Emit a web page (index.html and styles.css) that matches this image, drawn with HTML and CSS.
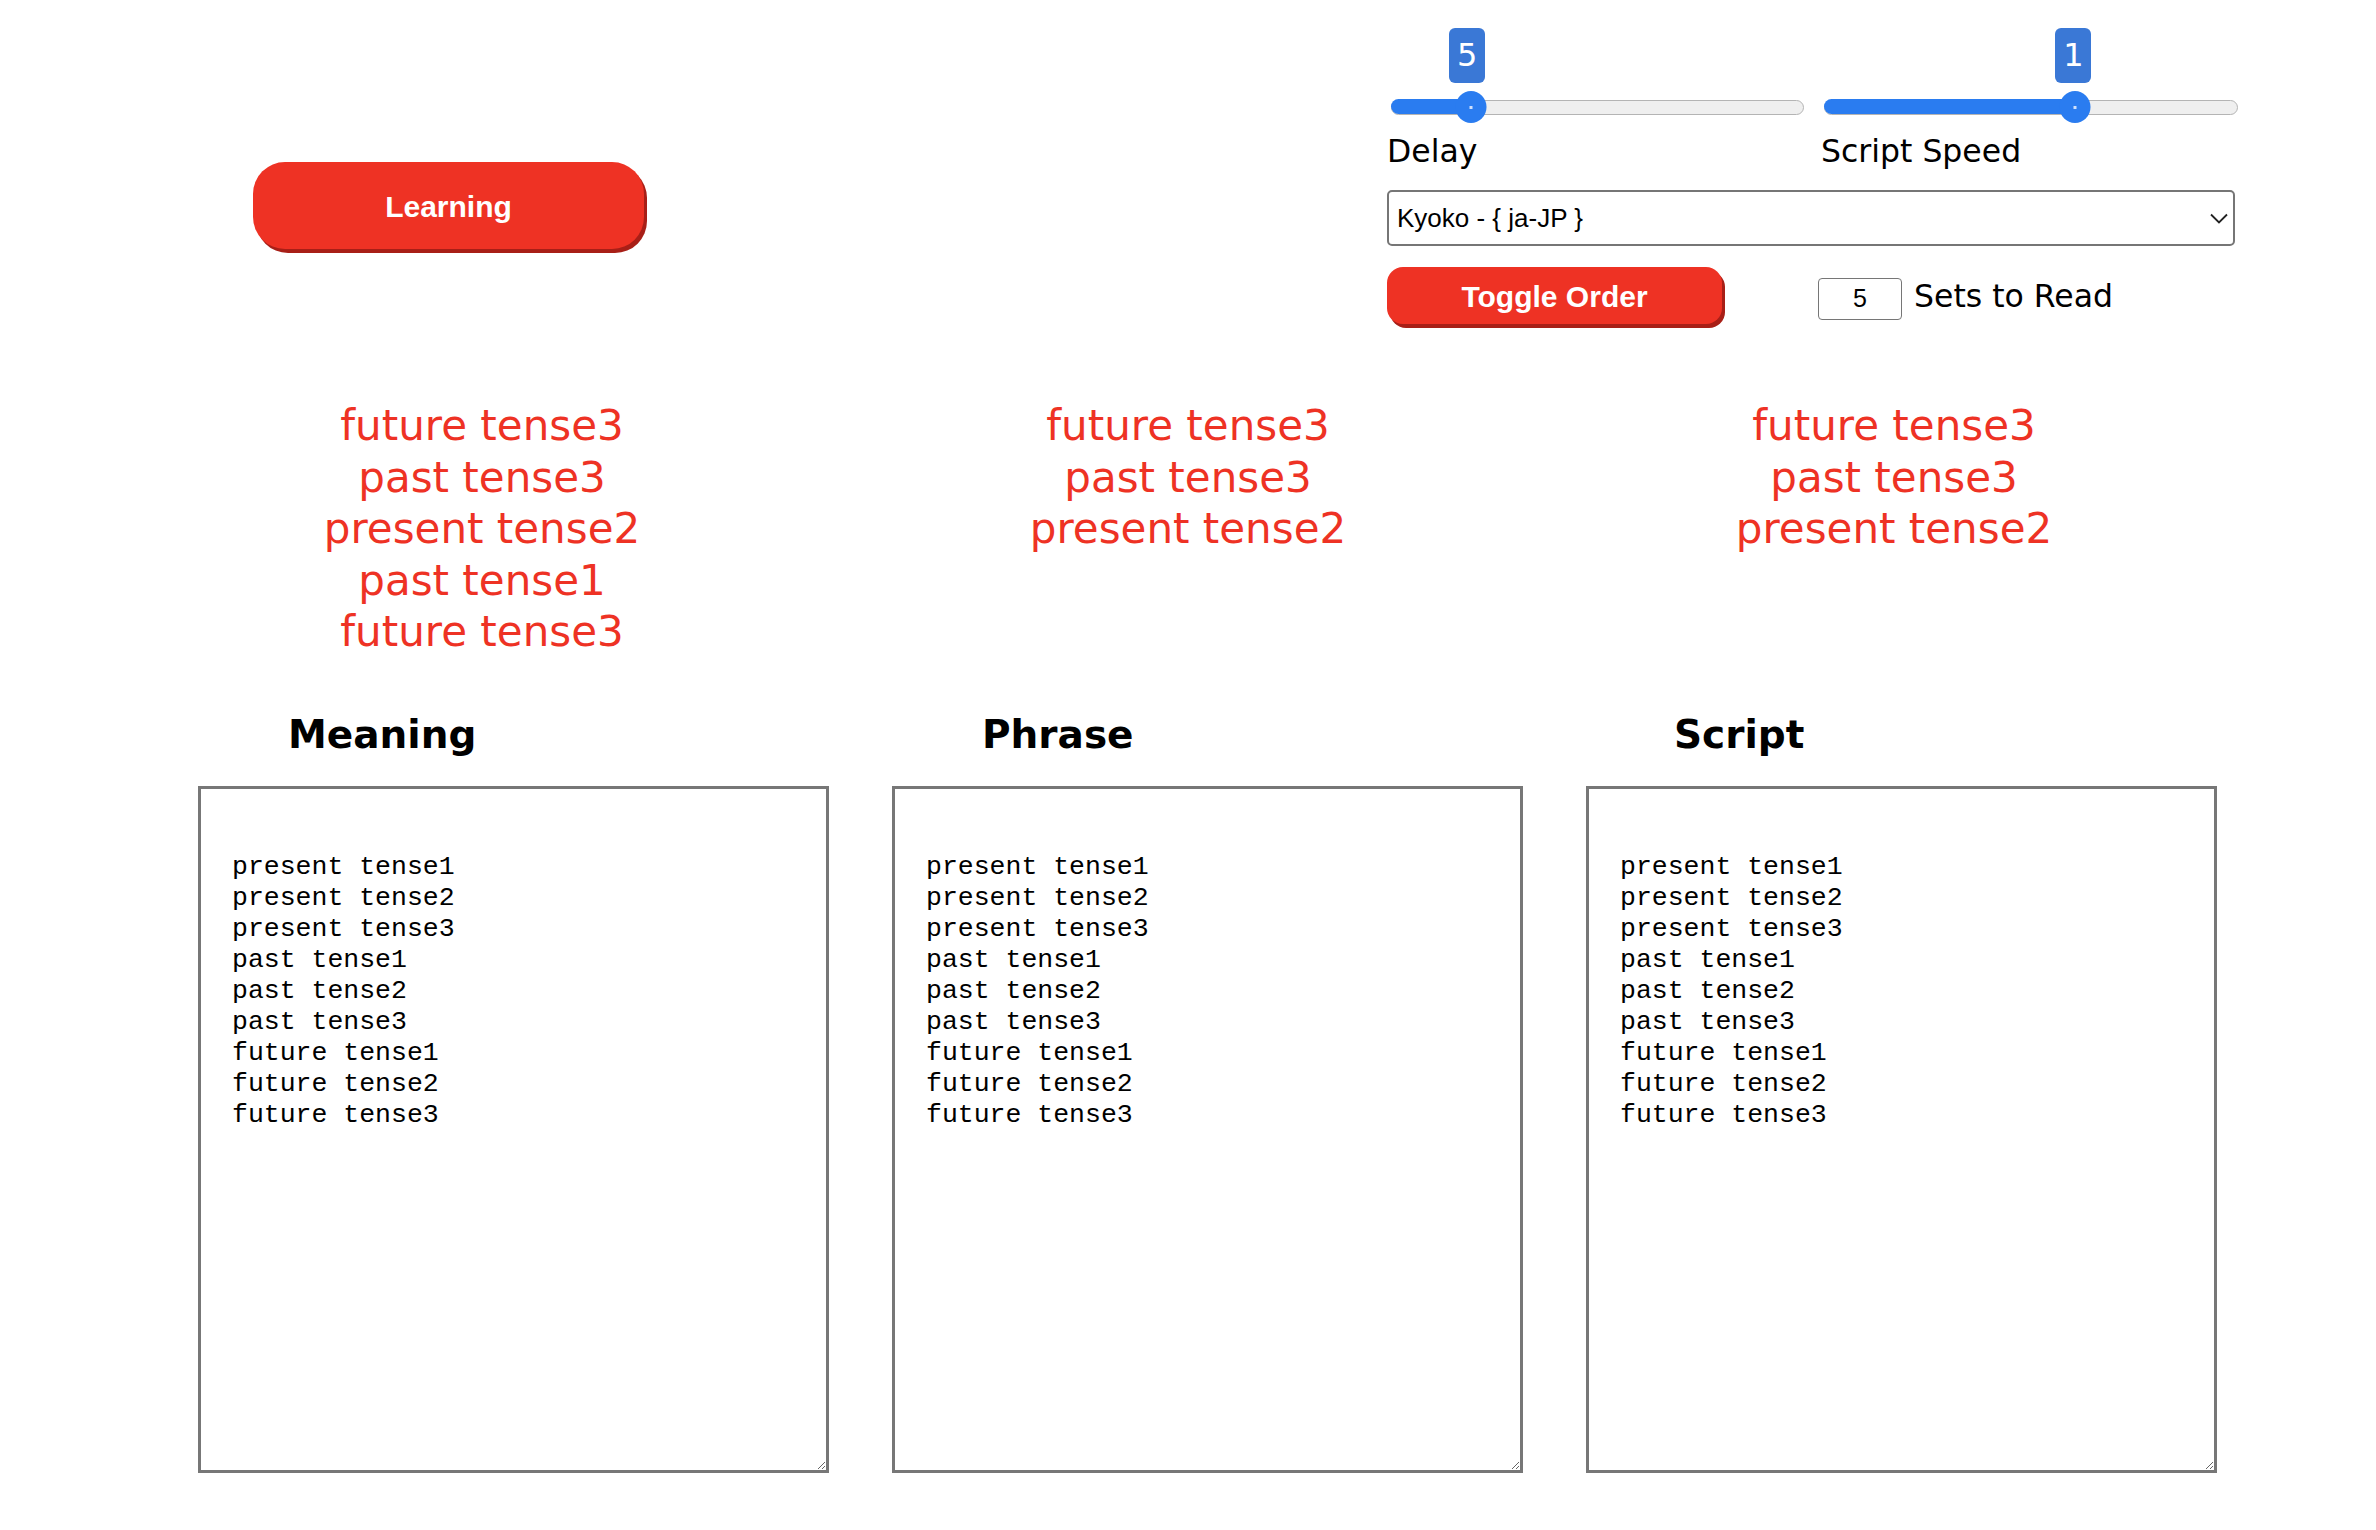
FILE: index.html
```html
<!DOCTYPE html>
<html lang="en">
<head>
<meta charset="utf-8">
<title>Learning</title>
<link rel="stylesheet" href="styles.css">
</head>
<body>
<div class="page">
  <header class="top">
    <button class="btn btn-learning" type="button">Learning</button>
    <div class="panel">
      <div class="sliders">
        <div class="slider slider-delay">
          <div class="rail">
            <div class="track">
              <div class="fill" style="width:19.3%"></div>
              <div class="thumb" style="left:19.3%"><span class="dot"></span></div>
              <div class="badge" style="left:18.3%">5</div>
            </div>
          </div>
          <div class="label">Delay</div>
        </div>
        <div class="slider slider-speed">
          <div class="rail">
            <div class="track">
              <div class="fill" style="width:60.8%"></div>
              <div class="thumb" style="left:60.8%"><span class="dot"></span></div>
              <div class="badge" style="left:60.3%">1</div>
            </div>
          </div>
          <div class="label">Script Speed</div>
        </div>
      </div>
      <div class="select-wrap">
        <select class="voice">
          <option>Kyoko - { ja-JP }</option>
        </select>
        <svg class="chevron" width="18" height="11" viewBox="0 0 18 11" aria-hidden="true"><path d="M1 1.5 L9 9.5 L17 1.5" fill="none" stroke="#222" stroke-width="1.8"/></svg>
      </div>
      <div class="order-row">
        <button class="btn btn-toggle" type="button">Toggle Order</button>
        <input class="sets" type="text" value="5">
        <span class="sets-label">Sets to Read</span>
      </div>
    </div>
  </header>

  <section class="current">
    <div class="current-col">
      <div>future tense3</div>
      <div>past tense3</div>
      <div>present tense2</div>
      <div>past tense1</div>
      <div>future tense3</div>
    </div>
    <div class="current-col">
      <div>future tense3</div>
      <div>past tense3</div>
      <div>present tense2</div>
    </div>
    <div class="current-col">
      <div>future tense3</div>
      <div>past tense3</div>
      <div>present tense2</div>
    </div>
  </section>

  <section class="lists">
    <div class="list">
      <h2 class="list-title">Meaning</h2>
      <textarea class="list-box" spellcheck="false">present tense1
present tense2
present tense3
past tense1
past tense2
past tense3
future tense1
future tense2
future tense3</textarea>
    </div>
    <div class="list">
      <h2 class="list-title">Phrase</h2>
      <textarea class="list-box" spellcheck="false">present tense1
present tense2
present tense3
past tense1
past tense2
past tense3
future tense1
future tense2
future tense3</textarea>
    </div>
    <div class="list">
      <h2 class="list-title list-title-script">Script</h2>
      <textarea class="list-box" spellcheck="false">present tense1
present tense2
present tense3
past tense1
past tense2
past tense3
future tense1
future tense2
future tense3</textarea>
    </div>
  </section>
</div>
</body>
</html>
```

FILE: styles.css
```css
* {
  box-sizing: border-box;
}

html, body {
  margin: 0;
  padding: 0;
  background: #ffffff;
}

body {
  font-family: "DejaVu Sans", Verdana, sans-serif;
  color: #000;
}

.page {
  width: 2376px;
  min-height: 1530px;
}

/* ---------- top area ---------- */
.top {
  display: flex;
  justify-content: space-between;
  align-items: flex-start;
  padding: 27px 133px 0 253px;
}

.btn {
  border: none;
  background: #ee3224;
  color: #fff;
  font-family: "Liberation Sans", Arial, sans-serif;
  font-weight: bold;
  font-size: 30px;
  cursor: pointer;
  padding: 0;
}

.btn-learning {
  width: 391px;
  height: 87px;
  margin-top: 135px;
  border-radius: 32px;
  box-shadow: 3px 4px 0 #a81f17;
  padding-top: 2px;
}

.panel {
  width: 856px;
  display: flex;
  flex-direction: column;
}

.sliders {
  display: grid;
  grid-template-columns: 434px 422px;
}

.rail {
  height: 32px;
  margin-top: 64px;
  display: flex;
  align-items: center;
}

.track {
  position: relative;
  width: 413px;
  height: 15px;
  margin-left: 4px;
  border-radius: 8px;
  background: #efefef;
  border: 1.5px solid #b4b4b4;
}

.slider-speed .track {
  width: 414px;
  margin-left: 3px;
}

.fill {
  height: 15px;
  margin-top: -1.5px;
  margin-left: -1.5px;
  background: #2a7cf0;
  border-radius: 8px;
}

.thumb {
  position: absolute;
  top: 50%;
  width: 31px;
  height: 32px;
  border-radius: 50%;
  background: #2a7cf0;
  transform: translate(-50%, -50%);
  display: flex;
  align-items: center;
  justify-content: center;
}

.dot {
  width: 3px;
  height: 3px;
  background: #cfe0fb;
}

.badge {
  position: absolute;
  bottom: 31px;
  width: 36px;
  height: 55px;
  transform: translateX(-50%);
  background: #3a78d6;
  border-radius: 6px;
  color: #fff;
  font-family: "DejaVu Sans", Verdana, sans-serif;
  font-size: 32px;
  line-height: 55px;
  text-align: center;
}

.label {
  margin-top: 10px;
  font-size: 31.5px;
  line-height: 36px;
  white-space: nowrap;
}

.select-wrap {
  position: relative;
  margin-top: 21px;
  width: 848px;
}

.voice {
  display: block;
  width: 848px;
  height: 56px;
  appearance: none;
  -webkit-appearance: none;
  background: #fff;
  border: 2px solid #767676;
  border-radius: 5px;
  padding: 0 0 0 8px;
  font-family: "Liberation Sans", Arial, sans-serif;
  font-size: 26px;
  color: #000;
}

.chevron {
  position: absolute;
  right: 7px;
  top: 23px;
}

.order-row {
  display: flex;
  align-items: center;
  margin-top: 21px;
}

.btn-toggle {
  width: 335px;
  height: 57px;
  border-radius: 16px;
  box-shadow: 3px 4px 0 #a81f17;
  padding-top: 2px;
}

.sets {
  width: 84px;
  height: 42px;
  margin-left: 96px;
  margin-top: 6px;
  border: 1.5px solid #767676;
  border-radius: 4px;
  text-align: center;
  font-family: "Liberation Sans", Arial, sans-serif;
  font-size: 25px;
  color: #000;
  padding: 0;
}

.sets-label {
  margin-left: 12px;
  font-size: 31.5px;
  line-height: 36px;
  white-space: nowrap;
}

/* ---------- current phrase ---------- */
.current {
  display: grid;
  grid-template-columns: repeat(3, 706px);
  margin: 76px 0 0 129px;
}

.current-col {
  text-align: center;
  color: #ee3224;
  font-size: 42px;
  line-height: 51.5px;
}

/* ---------- lists ---------- */
.lists {
  display: grid;
  grid-template-columns: repeat(3, 631px);
  column-gap: 63px;
  margin: 54px 0 0 198px;
}

.list {
  display: flex;
  flex-direction: column;
}

.list-title {
  margin: 0;
  padding-left: 90px;
  font-size: 39px;
  font-weight: bold;
  line-height: 46px;
}

.list-title-script {
  padding-left: 88px;
}

.list-box {
  margin-top: 28px;
  width: 631px;
  height: 687px;
  border: 3px solid #777;
  border-radius: 0;
  padding: 63px 30px 30px 31px;
  font-family: "Liberation Mono", "Courier New", monospace;
  font-size: 26.5px;
  line-height: 31px;
  color: #000;
  background: #fff;
  outline: none;
}
```
